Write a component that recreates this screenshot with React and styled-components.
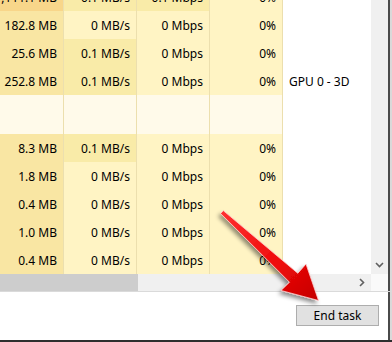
import React from "react";
import styled, { createGlobalStyle } from "styled-components";

const Global = createGlobalStyle`
  html, body { margin: 0; padding: 0; background: #fff; }
  body { font-family: "Noto Sans", "Open Sans", "Liberation Sans", sans-serif; }
`;

const Window = styled.div`
  position: relative;
  width: 392px;
  height: 342px;
  overflow: hidden;
  display: flex;
  flex-direction: column;
  background: #fff;
`;

const Main = styled.div`
  display: flex;
  height: 291px;
  flex: none;
`;

const LeftPane = styled.div`
  width: 371px;
  display: flex;
  flex-direction: column;
`;

const Viewport = styled.div`
  height: 274px;
  overflow: hidden;
`;

const List = styled.div`
  margin-top: -17px;
  display: flex;
  flex-direction: column;
`;

const Row = styled.div`
  display: grid;
  grid-template-columns: 64px 73px 73px 73px 1fr;
  height: ${(p) => (p.$header ? 39 : 28)}px;
`;

const Cell = styled.div`
  background: ${(p) => p.$bg};
  border-right: ${(p) => (p.$last ? "none" : "1px solid #ecdfae")};
  display: flex;
  align-items: center;
  justify-content: ${(p) => (p.$left ? "flex-start" : "flex-end")};
  padding: ${(p) => (p.$left ? "0 0 0 6px" : "0 6px 0 0")};
  font-size: 12px;
  color: #000;
  white-space: nowrap;
  overflow: hidden;
`;

const HScroll = styled.div`
  height: 17px;
  background: #f0f0f0;
  display: flex;
  align-items: stretch;
`;

const HThumb = styled.div`
  width: 138px;
  background: #cdcdcd;
`;

const HTrack = styled.div`
  flex: 1;
`;

const ArrowBtn = styled.div`
  width: 17px;
  display: flex;
  align-items: center;
  justify-content: center;
  color: #606060;
`;

const RightPane = styled.div`
  width: 17px;
  display: flex;
  flex-direction: column;
`;

const VScroll = styled.div`
  height: 274px;
  background: #f0f0f0;
  display: flex;
  flex-direction: column;
  justify-content: flex-end;
`;

const VArrow = styled.div`
  height: 17px;
  display: flex;
  align-items: center;
  justify-content: center;
  color: #606060;
`;

const Corner = styled.div`
  height: 17px;
  background: #fafafa;
`;

const Edge = styled.div`
  width: 4px;
  background: #d9d9d9;
  border-left: 2px solid #4a4a4a;
  box-sizing: border-box;
`;

const Footer = styled.div`
  flex: 1;
  display: flex;
  border-top: 1px solid #dadada;
`;

const FooterBody = styled.div`
  flex: 1;
  display: flex;
  justify-content: flex-end;
  align-items: flex-start;
  padding: 13px 9px 0 0;
`;

const Button = styled.button`
  width: 83px;
  height: 21px;
  background: #e1e1e1;
  border: 1px solid #adadad;
  font-family: inherit;
  font-size: 12px;
  color: #000;
  padding: 0;
  margin: 0;
  display: flex;
  align-items: center;
  justify-content: center;
`;

const BottomLine = styled.div`
  height: 2px;
  background: #2e2e2e;
  flex: none;
`;

const Overlay = styled.svg`
  position: absolute;
  left: 0;
  top: 0;
  pointer-events: none;
`;

const C = {
  memDark: "#f8d68a",
  mem: "#f9e6a3",
  l1: "#f9eba8",
  l0: "#fff4c4",
  head: "#fffaea",
  white: "#ffffff",
};

const rows = [
  { c: ["1,111.1 MB", "0.1 MB/s", "0.1 Mbps", "0%", ""], bg: [C.memDark, C.l1, C.l1, C.l0] },
  { c: ["182.8 MB", "0 MB/s", "0 Mbps", "0%", ""], bg: [C.mem, C.l0, C.l0, C.l0] },
  { c: ["25.6 MB", "0.1 MB/s", "0 Mbps", "0%", ""], bg: [C.mem, C.l1, C.l0, C.l0] },
  { c: ["252.8 MB", "0.1 MB/s", "0 Mbps", "0%", "GPU 0 - 3D"], bg: [C.mem, C.l1, C.l0, C.l0] },
  { header: true, c: ["", "", "", "", ""], bg: [C.head, C.head, C.head, C.head] },
  { c: ["8.3 MB", "0.1 MB/s", "0 Mbps", "0%", ""], bg: [C.mem, C.l1, C.l0, C.l0] },
  { c: ["1.8 MB", "0 MB/s", "0 Mbps", "0%", ""], bg: [C.mem, C.l0, C.l0, C.l0] },
  { c: ["0.4 MB", "0 MB/s", "0 Mbps", "0%", ""], bg: [C.mem, C.l0, C.l0, C.l0] },
  { c: ["1.0 MB", "0 MB/s", "0 Mbps", "0%", ""], bg: [C.mem, C.l0, C.l0, C.l0] },
  { c: ["0.4 MB", "0 MB/s", "0 Mbps", "0%", ""], bg: [C.mem, C.l0, C.l0, C.l0] },
];

function Chevron({ dir }) {
  const d = dir === "down" ? "M1 2 L4.5 5.5 L8 2" : "M2 1 L5.5 4.5 L2 8";
  return (
    <svg width="9" height="9" viewBox="0 0 9 9">
      <path d={d} fill="none" stroke="currentColor" strokeWidth="1.6" />
    </svg>
  );
}

function RedArrow() {
  return (
    <Overlay width="392" height="342" viewBox="0 0 392 342">
      <defs>
        <linearGradient id="rg" x1="0" y1="0" x2="1" y2="1">
          <stop offset="0" stopColor="#ff3030" />
          <stop offset="0.6" stopColor="#ee0a0a" />
          <stop offset="1" stopColor="#c40000" />
        </linearGradient>
        <filter id="sh" x="-20%" y="-20%" width="140%" height="140%">
          <feDropShadow dx="-2" dy="3" stdDeviation="2" floodColor="#000" floodOpacity="0.45" />
        </filter>
      </defs>
      <polygon
        points="223.3,210.6 297.8,273.3 306,264 318.5,300.5 281,290.5 289.5,282.2 220.6,213.5"
        fill="url(#rg)"
        stroke="#ffd0d0"
        strokeWidth="0.8"
        strokeLinejoin="round"
        filter="url(#sh)"
      />
    </Overlay>
  );
}

export default function App() {
  return (
    <>
      <Global />
      <Window>
        <Main>
          <LeftPane>
            <Viewport>
              <List>
                {rows.map((r, i) => (
                  <Row key={i} $header={r.header}>
                    {r.c.slice(0, 4).map((t, j) => (
                      <Cell key={j} $bg={r.bg[j]}>
                        {t}
                      </Cell>
                    ))}
                    <Cell $bg={C.white} $left $last>
                      {r.c[4]}
                    </Cell>
                  </Row>
                ))}
              </List>
            </Viewport>
            <HScroll>
              <HThumb />
              <HTrack />
              <ArrowBtn>
                <Chevron dir="right" />
              </ArrowBtn>
            </HScroll>
          </LeftPane>
          <RightPane>
            <VScroll>
              <VArrow>
                <Chevron dir="down" />
              </VArrow>
            </VScroll>
            <Corner />
          </RightPane>
          <Edge />
        </Main>
        <Footer>
          <FooterBody>
            <Button>End task</Button>
          </FooterBody>
          <Edge />
        </Footer>
        <BottomLine />
        <RedArrow />
      </Window>
    </>
  );
}
